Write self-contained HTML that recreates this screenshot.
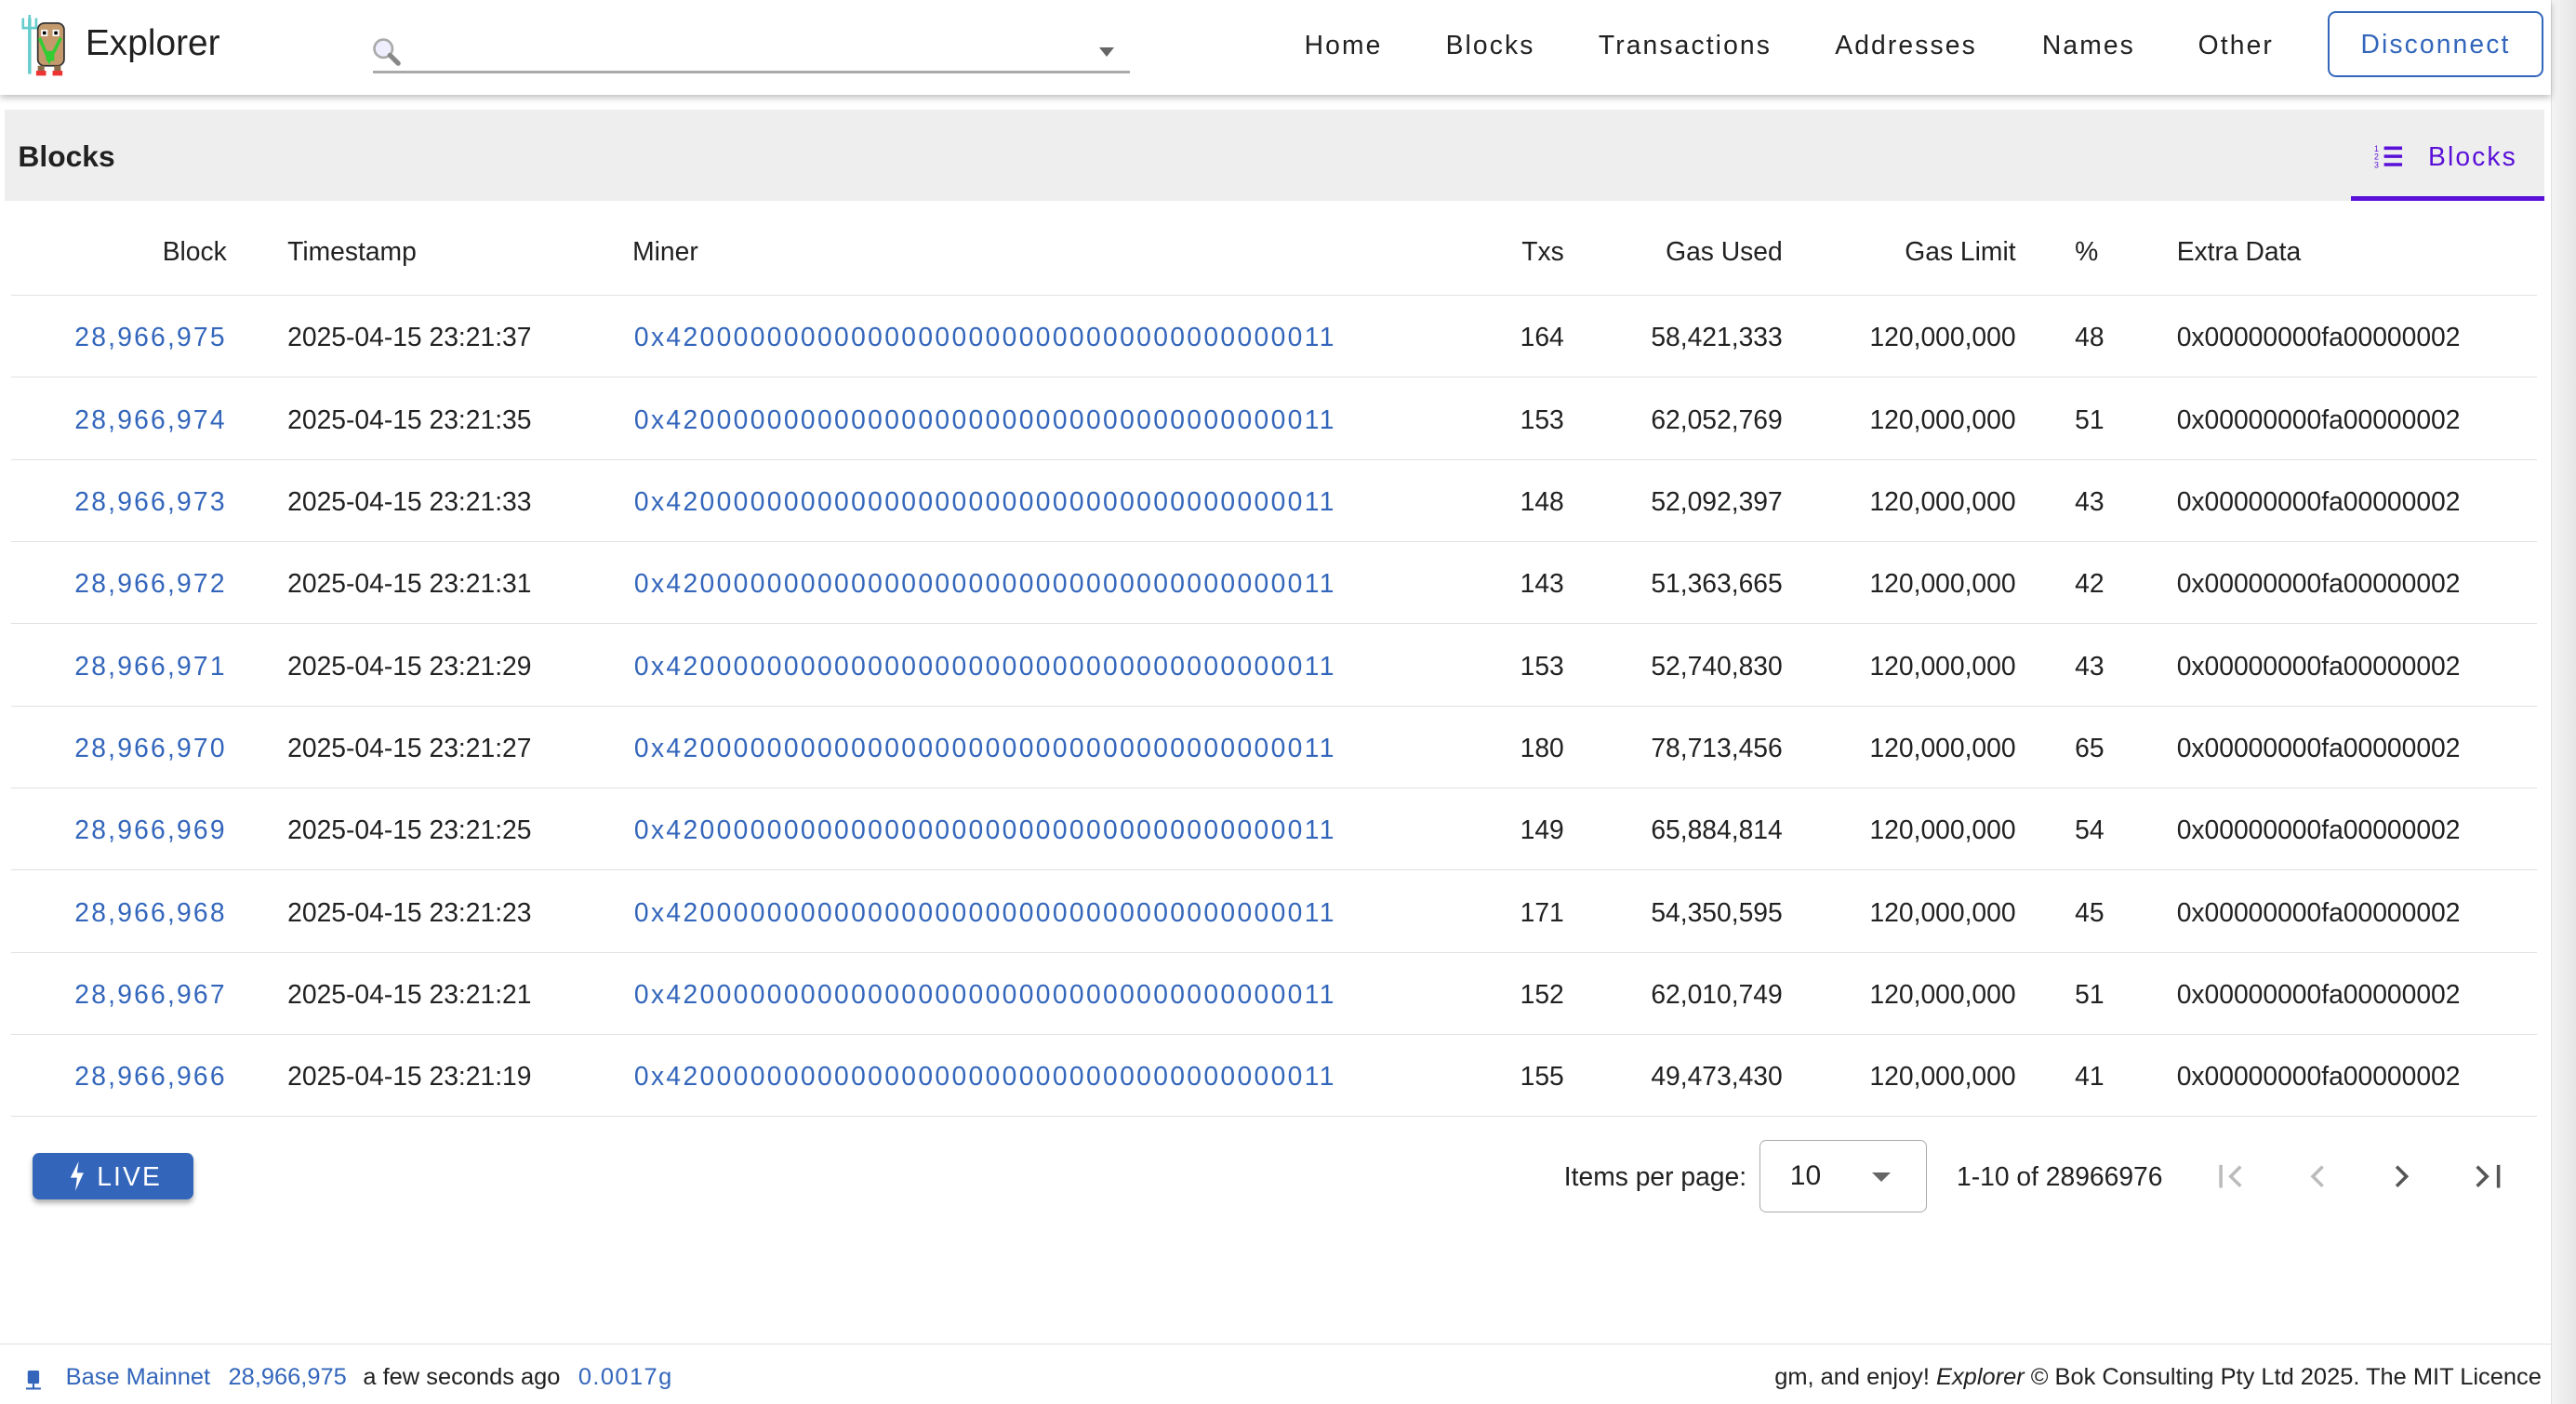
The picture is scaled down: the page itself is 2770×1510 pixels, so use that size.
<!DOCTYPE html>
<html><head><meta charset="utf-8"><style>
*{box-sizing:border-box;margin:0;padding:0}
html,body{width:2770px;height:1510px;overflow:hidden;background:#fff}
#w{zoom:1.76658;width:1568px;height:855px;position:relative;font-family:"Liberation Sans",sans-serif;color:#212121}
.a{position:absolute;white-space:nowrap}
.sb{position:absolute;left:1553px;top:0;width:15px;height:855px;background:linear-gradient(90deg,#f4f4f4,#e6e6e6);border-left:1px solid #e0e0e0}
.hdr{position:absolute;left:0;top:0;width:1553px;height:58px;background:#fff;box-shadow:0 2px 4px rgba(0,0,0,.25);z-index:2}
.nav{font-size:16px;letter-spacing:1.2px;top:18px}
.blue{color:#3366bb}
.tb{position:absolute;left:3px;top:67px;width:1546px;height:55px;background:#eeeeee}
.row{position:absolute;left:7px;width:1537px;height:50px;border-bottom:1px solid #e0e0e0;font-size:16px}
.row span{position:absolute;top:16px;white-space:nowrap}
.hrow span{top:14px}
.r{text-align:right}
.ls{letter-spacing:1.25px;color:#3366bb}
.m{letter-spacing:1.33px}
.ft{position:absolute;left:0;top:818px;width:1553px;border-top:1px solid #e0e0e0;height:37px}
.ft .a{font-size:14.4px;top:12px}
</style></head><body><div id="w">
<div class="sb"></div>
<div class="hdr">
 <svg class="a" style="left:13px;top:9px" width="30" height="38" viewBox="0 0 30 38">
  <rect x="4" y="2" width="2" height="34" fill="#6cc"/><path d="M1 2v6h8V2M5 0v3" stroke="#6cc" stroke-width="1.5" fill="none"/>
  <rect x="10" y="5" width="16" height="26" rx="4" fill="#c49a6c" stroke="#333" stroke-width="1"/>
  <rect x="12" y="9" width="4" height="4" fill="#fff"/><rect x="19" y="9" width="4" height="4" fill="#fff"/>
  <rect x="13" y="10" width="2" height="2" fill="#000"/><rect x="20" y="10" width="2" height="2" fill="#000"/>
  <path d="M11 14 L17 28 L24 14" stroke="#3c3" stroke-width="2" fill="none"/><rect x="15" y="22" width="5" height="6" fill="#3c3"/>
  <rect x="10" y="31" width="4" height="5" fill="#8a6b4a"/><rect x="20" y="31" width="4" height="5" fill="#8a6b4a"/>
  <rect x="9" y="34" width="6" height="3" fill="#e33"/><rect x="19" y="34" width="6" height="3" fill="#e33"/>
 </svg>
 <div class="a" style="left:52px;top:14px;font-size:22px">Explorer</div>
 <svg class="a" style="left:226px;top:22px" width="20" height="20" viewBox="0 0 20 20"><circle cx="7.5" cy="7.5" r="5.5" fill="#eef" stroke="#aaa" stroke-width="1.5"/><path d="M11.5 11.5l5 5" stroke="#888" stroke-width="3" stroke-linecap="round"/></svg>
 <div class="a" style="left:227px;top:43px;width:461px;height:2px;background:#aaa"></div>
 <div class="a" style="left:669px;top:29px;width:0;height:0;border-left:5px solid transparent;border-right:5px solid transparent;border-top:6px solid #666"></div>
 <div class="a nav" style="left:794px">Home</div>
 <div class="a nav" style="left:880px">Blocks</div>
 <div class="a nav" style="left:973px">Transactions</div>
 <div class="a nav" style="left:1117px">Addresses</div>
 <div class="a nav" style="left:1243px">Names</div>
 <div class="a nav" style="left:1338px">Other</div>
 <div class="a blue" style="left:1417px;top:7px;width:131px;height:40px;border:1.5px solid #3366bb;border-radius:5px;font-size:16px;letter-spacing:1.2px;text-align:center;line-height:38px">Disconnect</div>
</div>
<div class="tb">
 <div class="a" style="left:8px;top:18px;font-size:18px;font-weight:bold">Blocks</div>
 <div class="a" style="left:1428px;top:0;width:118px;height:55px;border-bottom:3px solid #5a10d8;color:#5a10d8">
  <svg class="a" style="left:14px;top:20px" width="18" height="16" viewBox="0 0 18 16"><path d="M6 3h11M6 8h11M6 13h11" stroke="#5a10d8" stroke-width="2"/><text x="0" y="5" font-size="5" fill="#5a10d8" font-family="Liberation Sans">1</text><text x="0" y="10" font-size="5" fill="#5a10d8" font-family="Liberation Sans">2</text><text x="0" y="15" font-size="5" fill="#5a10d8" font-family="Liberation Sans">3</text></svg>
  <div class="a" style="left:47px;top:19px;font-size:16px;letter-spacing:1.2px">Blocks</div>
 </div>
</div>
<div class="row hrow" style="top:130px">
 <span class="r" style="right:1406px">Block</span><span style="left:168px">Timestamp</span><span style="left:378px">Miner</span>
 <span style="right:592px">Txs</span><span style="right:459px">Gas Used</span><span style="right:317px">Gas Limit</span><span style="left:1256px">%</span><span style="left:1318px">Extra Data</span>
</div>
<div class="a" style="left:20px;top:702px;width:98px;height:28px;background:#3366bb;border-radius:4px;box-shadow:0 2px 3px rgba(0,0,0,.3);color:#fff;font-size:16px;letter-spacing:1.2px">
 <svg class="a" style="left:22px;top:5px" width="10" height="18" viewBox="0 0 10 18"><path d="M6 0L1 10h4l-1 8 5-11H5z" fill="#fff"/></svg>
 <div class="a" style="left:39px;top:5px">LIVE</div>
</div>
<div class="a" style="left:952px;top:707px;font-size:16px">Items per page:</div>
<div class="a" style="left:1071px;top:694px;width:102px;height:44px;border:1px solid #aaa;border-radius:4px">
 <div class="a" style="left:18px;top:12px;font-size:17px">10</div>
 <div class="a" style="left:68px;top:19px;border-left:6px solid transparent;border-right:6px solid transparent;border-top:6px solid #666"></div>
</div>
<div class="a" style="left:1191px;top:707px;font-size:16px">1-10 of 28966976</div>
<svg class="a" style="left:1348px;top:704px" width="180" height="24" viewBox="0 0 180 24">
 <path d="M4 5v14M16 6l-6 6 6 6" stroke="#bbb" stroke-width="2" fill="none"/>
 <path d="M66 6l-6 6 6 6" stroke="#bbb" stroke-width="2" fill="none"/>
 <path d="M111 6l6 6-6 6" stroke="#555" stroke-width="2" fill="none"/>
 <path d="M160 6l6 6-6 6M173 5v14" stroke="#555" stroke-width="2" fill="none"/>
</svg>
<div class="ft">
 <svg class="a" style="left:16px;top:16px" width="10" height="12" viewBox="0 0 10 12"><rect x="1" y="0" width="7" height="8" rx="1" fill="#3366bb"/><path d="M4.5 8v3M0 11h9" stroke="#3366bb" stroke-width="1.2"/></svg>
 <div class="a blue" style="left:40px">Base Mainnet</div>
 <div class="a blue" style="left:139px">28,966,975</div>
 <div class="a" style="left:221px">a few seconds ago</div>
 <div class="a blue" style="left:352px;letter-spacing:.8px">0.0017g</div>
 <div class="a" style="right:6px">gm, and enjoy! <i>Explorer</i> © Bok Consulting Pty Ltd 2025. The MIT Licence</div>
</div>
<div id="data">
<div class="row" style="top:180px"><span class="r ls" style="right:1406px">28,966,975</span><span style="left:168px">2025-04-15 23:21:37</span><span class="ls m" style="left:379px">0x4200000000000000000000000000000000000011</span><span style="right:592px">164</span><span style="right:459px">58,421,333</span><span style="right:317px">120,000,000</span><span style="left:1256px">48</span><span style="left:1318px">0x00000000fa00000002</span></div>
<div class="row" style="top:230px"><span class="r ls" style="right:1406px">28,966,974</span><span style="left:168px">2025-04-15 23:21:35</span><span class="ls m" style="left:379px">0x4200000000000000000000000000000000000011</span><span style="right:592px">153</span><span style="right:459px">62,052,769</span><span style="right:317px">120,000,000</span><span style="left:1256px">51</span><span style="left:1318px">0x00000000fa00000002</span></div>
<div class="row" style="top:280px"><span class="r ls" style="right:1406px">28,966,973</span><span style="left:168px">2025-04-15 23:21:33</span><span class="ls m" style="left:379px">0x4200000000000000000000000000000000000011</span><span style="right:592px">148</span><span style="right:459px">52,092,397</span><span style="right:317px">120,000,000</span><span style="left:1256px">43</span><span style="left:1318px">0x00000000fa00000002</span></div>
<div class="row" style="top:330px"><span class="r ls" style="right:1406px">28,966,972</span><span style="left:168px">2025-04-15 23:21:31</span><span class="ls m" style="left:379px">0x4200000000000000000000000000000000000011</span><span style="right:592px">143</span><span style="right:459px">51,363,665</span><span style="right:317px">120,000,000</span><span style="left:1256px">42</span><span style="left:1318px">0x00000000fa00000002</span></div>
<div class="row" style="top:380px"><span class="r ls" style="right:1406px">28,966,971</span><span style="left:168px">2025-04-15 23:21:29</span><span class="ls m" style="left:379px">0x4200000000000000000000000000000000000011</span><span style="right:592px">153</span><span style="right:459px">52,740,830</span><span style="right:317px">120,000,000</span><span style="left:1256px">43</span><span style="left:1318px">0x00000000fa00000002</span></div>
<div class="row" style="top:430px"><span class="r ls" style="right:1406px">28,966,970</span><span style="left:168px">2025-04-15 23:21:27</span><span class="ls m" style="left:379px">0x4200000000000000000000000000000000000011</span><span style="right:592px">180</span><span style="right:459px">78,713,456</span><span style="right:317px">120,000,000</span><span style="left:1256px">65</span><span style="left:1318px">0x00000000fa00000002</span></div>
<div class="row" style="top:480px"><span class="r ls" style="right:1406px">28,966,969</span><span style="left:168px">2025-04-15 23:21:25</span><span class="ls m" style="left:379px">0x4200000000000000000000000000000000000011</span><span style="right:592px">149</span><span style="right:459px">65,884,814</span><span style="right:317px">120,000,000</span><span style="left:1256px">54</span><span style="left:1318px">0x00000000fa00000002</span></div>
<div class="row" style="top:530px"><span class="r ls" style="right:1406px">28,966,968</span><span style="left:168px">2025-04-15 23:21:23</span><span class="ls m" style="left:379px">0x4200000000000000000000000000000000000011</span><span style="right:592px">171</span><span style="right:459px">54,350,595</span><span style="right:317px">120,000,000</span><span style="left:1256px">45</span><span style="left:1318px">0x00000000fa00000002</span></div>
<div class="row" style="top:580px"><span class="r ls" style="right:1406px">28,966,967</span><span style="left:168px">2025-04-15 23:21:21</span><span class="ls m" style="left:379px">0x4200000000000000000000000000000000000011</span><span style="right:592px">152</span><span style="right:459px">62,010,749</span><span style="right:317px">120,000,000</span><span style="left:1256px">51</span><span style="left:1318px">0x00000000fa00000002</span></div>
<div class="row" style="top:630px"><span class="r ls" style="right:1406px">28,966,966</span><span style="left:168px">2025-04-15 23:21:19</span><span class="ls m" style="left:379px">0x4200000000000000000000000000000000000011</span><span style="right:592px">155</span><span style="right:459px">49,473,430</span><span style="right:317px">120,000,000</span><span style="left:1256px">41</span><span style="left:1318px">0x00000000fa00000002</span></div>
</div>
</div></body></html>
